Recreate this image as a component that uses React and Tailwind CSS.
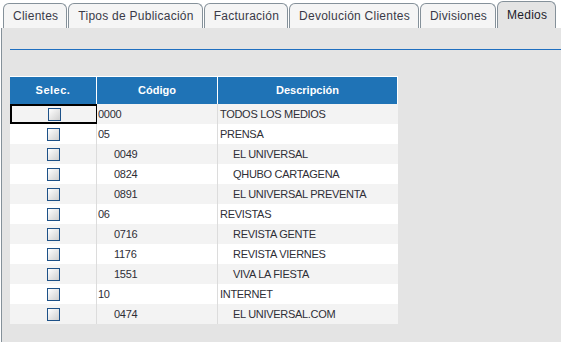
import React from 'react';

const tabs = ['Clientes', 'Tipos de Publicación', 'Facturación', 'Devolución Clientes', 'Divisiones', 'Medios'];

const rows = [
  { code: '0000', desc: 'TODOS LOS MEDIOS', sub: false },
  { code: '05', desc: 'PRENSA', sub: false },
  { code: '0049', desc: 'EL UNIVERSAL', sub: true },
  { code: '0824', desc: 'QHUBO CARTAGENA', sub: true },
  { code: '0891', desc: 'EL UNIVERSAL PREVENTA', sub: true },
  { code: '06', desc: 'REVISTAS', sub: false },
  { code: '0716', desc: 'REVISTA GENTE', sub: true },
  { code: '1176', desc: 'REVISTA VIERNES', sub: true },
  { code: '1551', desc: 'VIVA LA FIESTA', sub: true },
  { code: '10', desc: 'INTERNET', sub: false },
  { code: '0474', desc: 'EL UNIVERSAL.COM', sub: true },
];

const Checkbox = () => (
  <span className="block w-[13px] h-[13px] border border-[#1d5188] bg-gradient-to-br from-white to-[#cfcfcf]" />
);

export default function App() {
  return (
    <div className="w-[561px] h-[342px] bg-white overflow-hidden font-['Liberation_Sans',Arial,sans-serif]">
      {/* Tabs */}
      <div className="flex items-end h-[28px] pl-[3px] gap-[1px]">
        {tabs.map((t, i) => {
          const active = i === tabs.length - 1;
          return (
            <div
              key={t}
              className={`shrink-0 whitespace-nowrap flex items-center pl-[9px] pr-[8px] border border-b-0 border-[#85919a] rounded-t-[6px] text-[12px] tracking-[0.25px] ${
                active ? 'h-[27px] bg-[#e4e4e4] text-[#1c1c2a]' : 'h-[25px] bg-[#f5f5f5] text-[#3a3a48]'
              }`}
            >
              {t}
            </div>
          );
        })}
      </div>

      {/* Panel */}
      <div className="h-[314px] bg-[#e4e4e4] border-l border-[#85919a] ml-[1px] pt-[21px] pl-[8px]">
        <div className="h-[1px] w-full bg-[#1f6fc0]" />

        <div className="mt-[26px] w-[388px]">
          {/* Header */}
          <div className="flex h-[28px] bg-[#1f73b6] text-white font-bold text-[11px] border-t border-white">
            <div className="w-[87px] flex items-center justify-center border-r border-white tracking-[0.5px]">Selec.</div>
            <div className="w-[121px] flex items-center justify-center border-r border-white">Código</div>
            <div className="w-[180px] flex items-center justify-center border-r border-white">Descripción</div>
          </div>

          {/* Rows */}
          {rows.map((r, i) => (
            <div
              key={r.code}
              className={`flex h-[20px] text-[11px] tracking-[-0.3px] text-[#2e2e36] whitespace-nowrap ${i % 2 === 0 ? 'bg-[#f3f3f3]' : 'bg-white'}`}
            >
              <div
                className={`w-[87px] flex items-center justify-center border-r ${
                  i === 0 ? 'border-2 border-black' : 'border-[#dcdcdc]'
                }`}
              >
                <Checkbox />
              </div>
              <div className={`w-[121px] flex items-center border-r border-[#dcdcdc] ${r.sub ? 'pl-[17px]' : 'pl-[1px]'}`}>
                {r.code}
              </div>
              <div className={`w-[180px] flex items-center ${r.sub ? 'pl-[15px]' : 'pl-[2px]'}`}>{r.desc}</div>
            </div>
          ))}
        </div>
      </div>
    </div>
  );
}
